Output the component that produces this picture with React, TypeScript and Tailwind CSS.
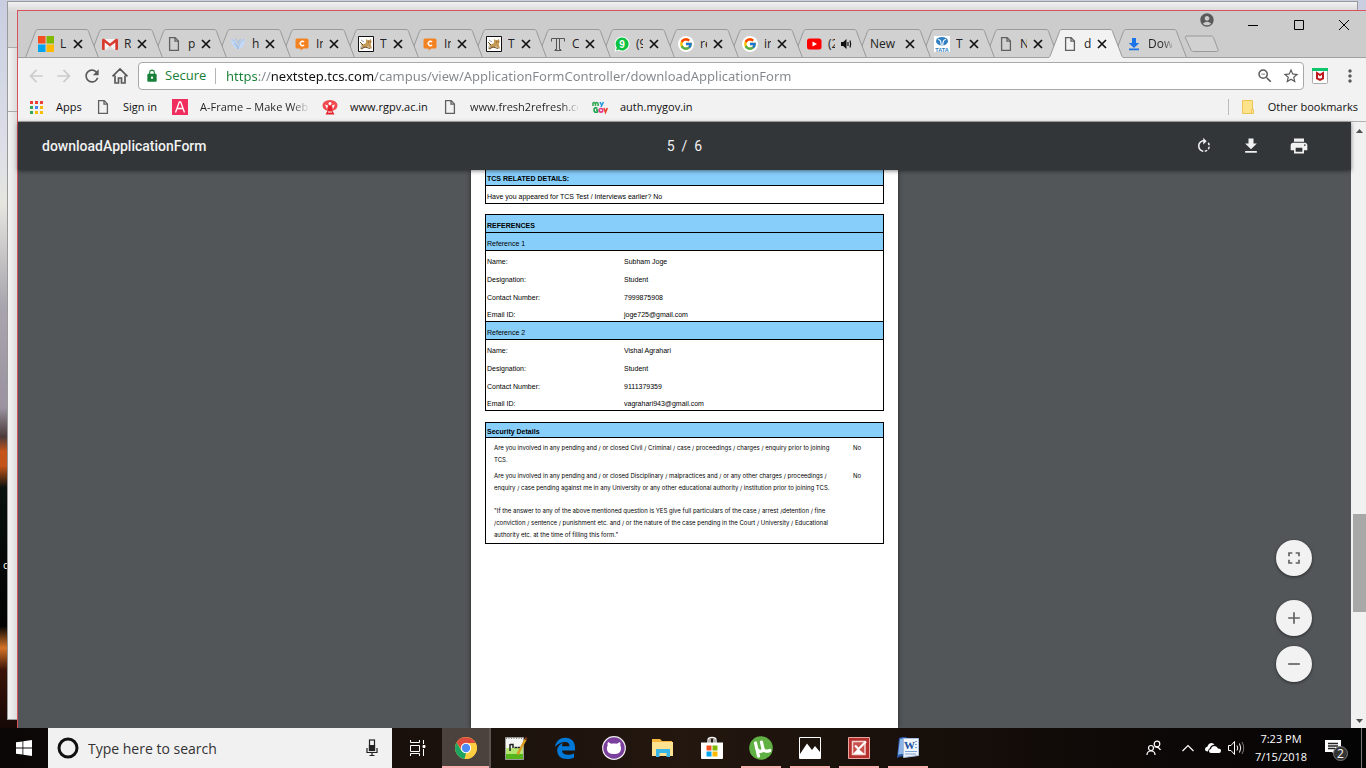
import React from "react";
import {
  MdAccountCircle,
  MdAdd,
  MdArrowBack,
  MdArrowForward,
  MdFileDownload,
  MdFullscreen,
  MdLock,
  MdMoreVert,
  MdPrint,
  MdRefresh,
  MdRemove,
  MdRotateRight,
  MdStarBorder,
  MdZoomOut,
} from "react-icons/md";
import { FcGoogle } from "react-icons/fc";

type IconName =
  | "microsoft" | "gmail" | "file" | "bird" | "chat" | "cat" | "serif"
  | "whatsapp" | "google" | "youtube" | "tata" | "download" | "none";

function FileIcon() {
  return (
    <svg width="16" height="16" viewBox="0 0 16 16" fill="none" stroke="#5f6062" strokeWidth="1.3">
      <path d="M3.6 1.6h5.600l3.200 3.300v9.500H3.600zM9 1.800v3.400h3.300" />
    </svg>
  );
}

function Favicon({ name }: { name: IconName }) {
  switch (name) {
    case "microsoft":
      return (
        <svg width="16" height="16" viewBox="0 0 16 16">
          <path fill="#f25022" d="M0 0h7.500v7.500H0z" /><path fill="#7fba00" d="M8.500 0H16v7.500H8.500z" />
          <path fill="#00a4ef" d="M0 8.500h7.500V16H0z" /><path fill="#ffb900" d="M8.500 8.500H16V16H8.500z" />
        </svg>
      );
    case "gmail":
      return (
        <svg width="16" height="16" viewBox="0 0 16 16">
          <path fill="#f4f4f4" d="M1 3h14v11H1z" />
          <path fill="#dcdcdc" d="M3.500 14L8 9.500l4.500 4.500z" />
          <path fill="#d93a2f" d="M0 4a1.500 1.500 0 0 1 2.400-1L8 7.600 13.600 3A1.500 1.500 0 0 1 16 4v9a1 1 0 0 1-1 1h-1.700V6.400L8 10.600 2.700 6.400V14H1a1 1 0 0 1-1-1z" />
        </svg>
      );
    case "file":
      return <FileIcon />;
    case "bird":
      return (
        <svg width="16" height="16" viewBox="0 0 16 16">
          <path fill="#c3d9f5" d="M1 3c4 0 6 3 7 10C4 12 1 8 1 3zM15 3c-4 0-6 3-6 10 4-1 6-5 6-10z" />
          <path fill="none" stroke="#9dbfeb" strokeWidth="1" d="M1.500 3.500c3 1 5 4 6.500 9.500 1-5.500 3-8.500 6.500-9.500M4 8c2 1 3 2.500 4 5M5 3c2 1 2.500 2 3 4l2.500-4" />
        </svg>
      );
    case "chat":
      return (
        <svg width="16" height="16" viewBox="0 0 16 16">
          <path fill="#f58220" d="M3 2.500h10a1.500 1.500 0 0 1 1.500 1.500v7a1.500 1.500 0 0 1-1.500 1.500h-3.500L6.500 14.500v-2H3A1.500 1.500 0 0 1 1.500 11V4A1.500 1.500 0 0 1 3 2.500z" />
          <path fill="none" stroke="#fff" strokeWidth="1.500" d="M10 6a2.200 2.200 0 1 0 0 3" />
        </svg>
      );
    case "cat":
      return (
        <svg width="16" height="16" viewBox="0 0 16 16">
          <path fill="#fff" stroke="#111" d="M.5.5h15v15H.500z" />
          <path fill="#c59a55" d="M8 3l1.500 1h2L13 2.700l.6 3.300-1 2 1.400 4.500h-2l-1.500-2-2.500.700L3 13H2l2-2.500L2.500 8 5 8.500 8 7z" />
          <path stroke="#594018" strokeWidth=".9" d="M2 6l3 3M3 13l4-2 5 1.500M10 6h.800M12 6h.700" fill="none" />
          <path stroke="#a7a7a7" d="M3 4l3 2M2 11h3" />
        </svg>
      );
    case "serif":
      return (
        <svg width="16" height="16" viewBox="0 0 16 16" fill="none" stroke="#555" strokeWidth="1">
          <path d="M1.500 5.500v-3h13v3M6.500 2.500v11M9.500 2.500v11M4.500 14.500h7M5 13.500h1.500M9.500 13.500H11" />
        </svg>
      );
    case "whatsapp":
      return (
        <svg width="16" height="16" viewBox="0 0 16 16">
          <path fill="#fff" d="M8 .5a7.500 7.500 0 1 1-3.500 14.100L.5 15.800l1.200-4A7.500 7.500 0 0 1 8 .5z" />
          <path fill="#0dc143" d="M8 1.500a6.500 6.500 0 1 1-3.200 12.100L2 14.400l.8-2.700A6.500 6.500 0 0 1 8 1.500z" />
          <text x="8" y="11.500" textAnchor="middle" fontSize="10" fontWeight="700" fill="#fff" fontFamily="Liberation Sans, sans-serif">9</text>
        </svg>
      );
    case "google":
      return (
        <span className="flex size-4 items-center justify-center rounded-full bg-white">
          <FcGoogle size={14} />
        </span>
      );
    case "youtube":
      return (
        <svg width="16" height="16" viewBox="0 0 16 16">
          <rect x="1" y="2.500" width="14.500" height="11" rx="2.500" fill="#f00" />
          <path fill="#fff" d="M6.500 5.500l4.500 2.500-4.500 2.500z" />
        </svg>
      );
    case "tata":
      return (
        <svg width="16" height="16" viewBox="0 0 16 16">
          <path fill="#fff" d="M0 0h16v16H0z" />
          <ellipse cx="8" cy="5.200" rx="6" ry="4.200" fill="#2f7fc2" />
          <path fill="none" stroke="#fff" strokeWidth="1.100" d="M7.200 9.500c0-4-.6-6-3.200-6M8.800 9.500c0-4 .6-6 3.200-6" />
          <text x="8" y="15.500" textAnchor="middle" fontSize="5.500" fontWeight="700" fill="#2f7fc2" fontFamily="Liberation Sans, sans-serif">TATA</text>
        </svg>
      );
    case "download":
      return (
        <svg width="16" height="16" viewBox="0 0 16 16">
          <path fill="#1a73e8" d="M6 2h4v5h3.200L8 12 2.800 7H6zM3 12.500h10v1.700H3z" />
        </svg>
      );
    default:
      return null;
  }
}

interface TabInfo {
  icon: IconName;
  title: string;
  active?: boolean;
  end?: "close" | "sound" | "none";
}

const tabs: TabInfo[] = [
  { icon: "microsoft", title: "L" },
  { icon: "gmail", title: "R" },
  { icon: "file", title: "p" },
  { icon: "bird", title: "h" },
  { icon: "chat", title: "In" },
  { icon: "cat", title: "T" },
  { icon: "chat", title: "In" },
  { icon: "cat", title: "T" },
  { icon: "serif", title: "C" },
  { icon: "whatsapp", title: "(9" },
  { icon: "google", title: "re" },
  { icon: "google", title: "in" },
  { icon: "youtube", title: "(2", end: "sound" },
  { icon: "none", title: "New" },
  { icon: "tata", title: "T" },
  { icon: "file", title: "N" },
  { icon: "file", title: "d", active: true },
  { icon: "download", title: "Dow", end: "none" },
];

function Tab({ tab, index }: { tab: TabInfo; index: number }) {
  const end = tab.end ?? "close";
  return (
    <li className="relative -mr-3 h-[29px] w-[76px] shrink-0" style={{ zIndex: tab.active ? 40 : 30 - index }}>
      <svg className="absolute inset-0" width="76" height="29" viewBox="0 0 76 29">
        <path
          d="M0 29C1.500 28.500 1.800 27.500 2.500 26L11.500 2.500C12 1.200 12.500.5 14 .5H62c1.500 0 2 .7 2.500 2L73.500 26c.7 1.500 1 2.500 2.500 3"
          fill={tab.active ? "#f2f2f2" : "#d1d1d1"}
          stroke="#9a9a9a"
        />
        {!tab.active && <path d="M0 28.500h76" stroke="#a0a0a0" />}
      </svg>
      <div className="relative flex h-[29px] items-center pl-[14px] pt-px text-[12px] text-[#222]">
        {tab.icon !== "none" && (
          <span className="mr-1.5 flex w-4 shrink-0"><Favicon name={tab.icon} /></span>
        )}
        <a
          href="#tab"
          className={`mr-[5px] block overflow-hidden whitespace-nowrap ${tab.icon === "none" ? "w-[29px]" : end === "none" ? "w-6 bg-linear-to-r from-[#222] from-60% to-[#222]/20 bg-clip-text text-transparent" : "w-[7px]"}`}
        >
          {tab.title}
        </a>
        {end === "close" && (
          <button aria-label="Close tab" className="flex size-3 items-center justify-center">
            <svg width="10" height="10" viewBox="0 0 10 10" stroke="#111" strokeWidth="1.700"><path d="M1 1l8 8M9 1L1 9" /></svg>
          </button>
        )}
        {end === "sound" && (
          <button aria-label="Mute tab" className="flex size-3 items-center justify-center">
            <svg width="12" height="12" viewBox="0 0 12 12" fill="none" stroke="#111" strokeWidth="1.200">
              <path fill="#111" stroke="none" d="M1 4h2.200L6.500 1v10L3.200 8H1z" /><path d="M8 4v4M10 2.500q1.300 3.500 0 7" />
            </svg>
          </button>
        )}
      </div>
    </li>
  );
}

function TitleBar() {
  return (
    <header className="relative flex h-[47px] shrink-0 items-end border-b border-[#a0a0a0] bg-[#ccc]">
      <ul className="relative top-px flex items-end pl-1.5">
        {tabs.map((tab, i) => <Tab key={i} tab={tab} index={i} />)}
      </ul>
      <button aria-label="New tab" className="mb-1 ml-2">
        <svg width="36" height="18" viewBox="0 0 36 18">
          <path d="M3 1h24c1.500 0 2 .5 2.500 1.500L34 14.500c.5 1.500 0 2-1.500 2H9.500c-1.500 0-2-.5-2.500-1.500L1.500 3C1 1.800 1.500 1 3 1z" fill="#d1d1d1" stroke="#9a9a9a" />
        </svg>
      </button>
      <div className="absolute right-0 top-0 flex items-start">
        <button aria-label="Profile" className="mr-[15px] mt-px text-[#5a5a5a]"><MdAccountCircle size={16} /></button>
        <button aria-label="Minimize" className="flex h-7 w-[46px] items-center justify-center"><svg width="10" height="10" stroke="#000"><path d="M0 5.500h10" /></svg></button>
        <button aria-label="Maximize" className="flex h-7 w-[46px] items-center justify-center"><svg width="10" height="10" fill="none" stroke="#000"><path d="M.5.5h9v9h-9z" /></svg></button>
        <button aria-label="Close" className="flex h-7 w-[44px] items-center justify-center"><svg width="10" height="10" stroke="#000"><path d="M0 0l10 10M10 0L0 10" /></svg></button>
      </div>
    </header>
  );
}

function AddressBar() {
  return (
    <nav className="flex h-8 shrink-0 items-center bg-[#f2f2f2] pl-1 pr-1.5 pt-1 text-[#5a5a5a]">
      <button aria-label="Back" className="flex w-7 justify-center text-[#ccc]"><MdArrowBack size={20} /></button>
      <button aria-label="Forward" className="flex w-7 justify-center text-[#ccc]"><MdArrowForward size={20} /></button>
      <button aria-label="Reload" className="flex w-7 justify-center"><MdRefresh size={20} /></button>
      <button aria-label="Home" className="flex w-7 justify-center">
        <svg width="18" height="18" viewBox="0 0 18 18" fill="none" stroke="currentColor" strokeWidth="1.700"><path d="M1.500 9.300L9 2l7.500 7.300M4 8.500V16h3.500v-5h3v5H14V8.500" /></svg>
      </button>
      <form className="ml-1 flex h-7 min-w-0 flex-1 items-center rounded-sm border border-[#a8a8a8] bg-white pl-1.5 pr-[3px]" onSubmit={(e) => e.preventDefault()}>
        <MdLock className="text-[#188038]" size={14} />
        <label htmlFor="url" className="ml-1.5 w-[43px] text-[13px] text-[#188038]">Secure</label>
        <span className="ml-[7px] mr-[10px] h-4 w-px bg-[#b4b4b4]" />
        <input
          id="url"
          defaultValue="https://nextstep.tcs.com/campus/view/ApplicationFormController/downloadApplicationForm"
          className="min-w-0 flex-1 bg-linear-[to_right,#188038_0_31px,#80868b_31px_45px,#111_45px_149px,#80868b_149px] bg-clip-text pt-px font-['Noto_Sans',sans-serif] text-[13px] text-transparent outline-none"
        />
        <button aria-label="Zoom" className="mr-2 flex"><MdZoomOut size={18} /></button>
        <button aria-label="Bookmark" className="flex"><MdStarBorder size={18} /></button>
      </form>
      <button aria-label="McAfee" className="ml-2 flex">
        <svg width="16" height="16" viewBox="0 0 16 16">
          <rect x=".5" y=".5" width="15" height="15" rx="1" fill="#fff" stroke="#aaa" />
          <path fill="#0fc46c" d="M0 0h16v3H0z" />
          <path fill="none" stroke="#c01818" strokeWidth="2" d="M5 5v5.500L8 12l3-1.500V5L8 7z" />
        </svg>
      </button>
      <button aria-label="Menu" className="ml-3 flex"><MdMoreVert size={20} /></button>
    </nav>
  );
}

function Bookmark({ icon, label, width, fade }: { icon: React.ReactNode; label: string; width: string; fade?: boolean }) {
  return (
    <a href="#bookmark" className={`flex shrink-0 items-center ${width}`}>
      <span className="mr-3 flex w-4 shrink-0 justify-center">{icon}</span>
      <span className={fade ? "w-[108px] overflow-hidden whitespace-nowrap bg-linear-to-r from-[#222] from-85% to-[#222]/10 bg-clip-text text-transparent" : "whitespace-nowrap"}>{label}</span>
    </a>
  );
}

function BookmarksBar() {
  const dots = ["#ea4335", "#ea4335", "#ea4335", "#34a853", "#4285f4", "#fbbc05", "#34a853", "#fbbc05", "#fbbc05"];
  return (
    <nav className="flex h-8 shrink-0 items-center border-b border-[#b0b0b0] bg-[#f2f2f2] pl-[10px] pr-2 pt-[3px] text-[11px] text-[#111]">
      <Bookmark width="w-[67px]" label="Apps" icon={<svg width="13" height="13">{dots.map((c, i) => <rect key={i} x={(i % 3) * 5} y={Math.floor(i / 3) * 5} width="3" height="3" fill={c} />)}</svg>} />
      <Bookmark width="w-[77px]" label="Sign in" icon={<FileIcon />} />
      <Bookmark width="w-[150px]" fade label="A-Frame – Make WebVR" icon={
        <svg width="16" height="16" viewBox="0 0 16 16"><path fill="#ef2d5e" d="M0 0h16v16H0z" /><path d="M3.500 13.500L7.300 3h1.400l3.800 10.500M5 9.500h6" fill="none" stroke="#fff" strokeWidth="1.300" /></svg>
      } />
      <Bookmark width="w-[120px]" label="www.rgpv.ac.in" icon={
        <svg width="16" height="16" viewBox="0 0 16 16">
          <ellipse cx="8" cy="6.500" rx="7.500" ry="5.500" fill="#ee4a50" />
          <path fill="#fff" d="M3 5.500l3 1-1 3.500zM13 5.500l-3 1 1 3.500z" />
          <circle cx="8" cy="4.500" r="1.500" fill="#fff" />
          <path fill="#e3202b" d="M6.500 7h3l.5 4 2.500 4.500h-9L6 11z" />
          <path stroke="#fff" d="M6 13h4" />
        </svg>
      } />
      <Bookmark width="w-[150px]" fade label="www.fresh2refresh.com" icon={<FileIcon />} />
      <Bookmark width="w-[110px]" label="auth.mygov.in" icon={
        <svg width="16" height="16" viewBox="0 0 16 16" fill="none" strokeWidth="1.600">
          <path stroke="#35a853" d="M1 7V3.500M1 4q3-1.500 2.500 3M3.600 4q3-1.500 2.600 3" />
          <path stroke="#2b9be0" d="M8 3l1.500 3M11.500 3L9 8" />
          <path stroke="#19a34a" d="M5.500 9.200Q2 8 2 11t3.500 2v-2H4" />
          <circle cx="9" cy="11.300" r="1.800" stroke="#e8388a" />
          <path stroke="#e8432f" d="M12 9l1.500 4.200L15.300 9" />
        </svg>
      } />
      <span className="ml-auto mr-[11px] h-4 w-px bg-[#bbb]" />
      <Bookmark width="" label="Other bookmarks" icon={<svg width="14" height="14" viewBox="0 0 14 14"><path fill="#ffe38a" stroke="#edc557" d="M1.500.5h10v9h1v4h-11zM11.500 9.500h-1v4" /></svg>} />
    </nav>
  );
}

function DetailRows({ rows }: { rows: [string, string][] }) {
  return (
    <>
      {rows.map(([k, v], i) => (
        <tr key={k} className={i === rows.length - 1 ? "h-[17px]" : "h-[18px]"}>
          <td className={`w-[137px] p-0 pl-px pt-0.5 ${i === rows.length - 1 ? "border-b border-black" : ""}`}>{k}</td>
          <td className={`p-0 pl-px pt-0.5 ${i === rows.length - 1 ? "border-b border-black" : ""}`}>{v}</td>
        </tr>
      ))}
    </>
  );
}

function PdfPage() {
  const head = "border-b border-black bg-[#87cefa] p-0 pl-px pt-1 text-left";
  const table = "w-full border-separate border-spacing-0 border-x border-black";
  return (
    <article className="flex w-[427px] flex-col bg-white px-[14px] font-['Liberation_Sans',Arial,sans-serif] text-[7px] leading-[9px] text-black shadow-[0_0_4px_#222]">
      <table className={table}>
        <tbody>
          <tr className="h-4"><th className="border-b border-black bg-[#87cefa] p-0 pl-px pt-px text-left">TCS RELATED DETAILS:</th></tr>
          <tr className="h-[18px]"><td className="border-b border-black p-0 pl-px pt-1">Have you appeared for TCS Test / Interviews earlier? No</td></tr>
        </tbody>
      </table>
      <table className={`${table} mt-[10px] border-t`}>
        <tbody>
          <tr className="h-[18px]"><th colSpan={2} className={head}>REFERENCES</th></tr>
          <tr className="h-[18px]"><th colSpan={2} className={`${head} font-normal`}>Reference 1</th></tr>
          <DetailRows rows={[["Name:", "Subham Joge"], ["Designation:", "Student"], ["Contact Number:", "7999875908"], ["Email ID:", "joge725@gmail.com"]]} />
          <tr className="h-[18px]"><th colSpan={2} className={`${head} font-normal`}>Reference 2</th></tr>
          <DetailRows rows={[["Name:", "Vishal Agrahari"], ["Designation:", "Student"], ["Contact Number:", "9111379359"], ["Email ID:", "vagrahari943@gmail.com"]]} />
        </tbody>
      </table>
      <table className={`${table} mt-[11px] border-y`}>
        <tbody className="align-top font-[Inter,sans-serif] text-[6px] leading-[12px]">
          <tr className="h-[15px]"><th colSpan={2} className="border-b border-black bg-[#87cefa] p-0 pl-px pt-1 text-left font-['Liberation_Sans',Arial,sans-serif] text-[7px] leading-[9px]">Security Details</th></tr>
          <tr>
            <td className="whitespace-nowrap p-0 pl-2 pt-1">Are you involved in any pending and / or closed Civil / Criminal / case / proceedings / charges / enquiry prior to joining<br />TCS.</td>
            <td className="w-[30px] p-0 pt-1">No</td>
          </tr>
          <tr>
            <td className="whitespace-nowrap p-0 pl-2 pt-1">Are you involved in any pending and / or closed Disciplinary / malpractices and / or any other charges / proceedings /<br />enquiry / case pending against me in any University or any other educational authority / institution prior to joining TCS.</td>
            <td className="p-0 pt-1">No</td>
          </tr>
          <tr>
            <td colSpan={2} className="p-0 pb-0.5 pl-2 pt-[11px]">"If the answer to any of the above mentioned question is YES give full particulars of the case / arrest /detention / fine<br />/conviction / sentence / punishment etc. and / or the nature of the case pending in the Court / University / Educational<br />authority etc. at the time of filling this form."</td>
          </tr>
        </tbody>
      </table>
    </article>
  );
}

function PdfViewer() {
  const round = "flex size-9 items-center justify-center rounded-full bg-[#f2f2f2] text-[#616161] shadow-[0_1px_3px_rgba(0,0,0,0.5)]";
  return (
    <main className="flex min-h-0 flex-1 bg-[#525659]">
      <section className="relative flex min-w-0 flex-1 flex-col">
        <div className="z-10 grid h-12 shrink-0 grid-cols-3 items-center bg-[#323639] pl-6 pr-[42px] font-[Roboto,sans-serif] text-[14px] text-[#f1f1f1] shadow-[0_1px_4px_rgba(0,0,0,0.5)]">
          <h1 className="font-medium">downloadApplicationForm</h1>
          <p className="pl-[18px] text-center">5&nbsp; /&nbsp; 6</p>
          <div className="flex justify-end gap-7">
            <button aria-label="Rotate clockwise"><MdRotateRight size={18} /></button>
            <button aria-label="Download"><MdFileDownload size={20} /></button>
            <button aria-label="Print"><MdPrint size={20} /></button>
          </div>
        </div>
        <div className="flex min-h-0 flex-1 justify-center overflow-hidden"><PdfPage /></div>
        <div className="absolute bottom-[46px] right-[39px] flex flex-col">
          <button aria-label="Fit to page" className={`${round} mb-6`}><MdFullscreen size={20} /></button>
          <button aria-label="Zoom in" className={`${round} mb-[10px]`}><MdAdd size={20} /></button>
          <button aria-label="Zoom out" className={round}><MdRemove size={20} /></button>
        </div>
      </section>
      <div className="flex w-[15px] shrink-0 flex-col items-end bg-[#f1f1f1]">
        <svg width="15" height="16" viewBox="0 0 15 16"><path fill="#505050" d="M5 11h7L8.500 7z" /></svg>
        <div className="flex-[376]" />
        <div className="w-[13px] flex-[98] bg-[#a8a8a8]" />
        <div className="flex-[100]" />
        <svg width="15" height="16" viewBox="0 0 15 16"><path fill="#505050" d="M5 7h7L8.500 11z" /></svg>
      </div>
    </main>
  );
}

const apps: { label: string; running?: boolean; active?: boolean; icon: React.ReactNode }[] = [
  {
    label: "Chrome", active: true, icon: (
      <svg width="22" height="22" viewBox="0 0 22 22">
        <circle cx="11" cy="11" r="11" fill="#ffcd40" />
        <path fill="#dd4b3e" d="M1.500 5.500A11 11 0 0 1 20.600 6H11L7 13.500z" />
        <path fill="#1da462" d="M1.500 5.500l5 8.200L11 16l-1.500 5.900A11 11 0 0 1 1.500 5.500z" />
        <path fill="#ffcd40" d="M20.600 6A11 11 0 0 1 9.500 21.900L15.500 13 14 6z" />
        <circle cx="11" cy="11" r="5.200" fill="#fff" /><circle cx="11" cy="11" r="4.200" fill="#4c8bf5" />
      </svg>
    ),
  },
  {
    label: "Notepad++", icon: (
      <svg width="24" height="24" viewBox="0 0 24 24">
        <path fill="#f5f7f4" stroke="#999" d="M1.500 1.500h18v22h-18z" /><path fill="#b5e672" d="M2 12h17v11H2z" /><path fill="#57b51c" d="M2 18h17v5H2z" />
        <path stroke="#888" strokeDasharray="1 1.500" strokeWidth="2" d="M2 2h17" />
        <path stroke="#222" strokeWidth="1.500" fill="none" d="M6 8v7M6 8.500h3V12M10.500 11.500h3M14 11.500h2" />
        <path stroke="#d99b1e" strokeWidth="2.500" d="M21.500 3.500l-8 15" /><path stroke="#7a3a1a" strokeWidth="2.500" d="M22.500 1.500l-1 2" />
      </svg>
    ),
  },
  {
    label: "Edge", icon: (
      <svg width="22" height="22" viewBox="0 0 22 22">
        <path fill="#0078d7" d="M1 10C2 4 6 .8 11.500.8 17.500.8 21 5 21 11v2.500H8c.3 3 3 4.300 6 4.300 2.300 0 4.300-.7 6-1.600v4.300c-2 1-4.500 1.500-7 1.500-6 0-9.800-3.500-9.800-8.500C3.200 10 5.500 7.300 9 6 8.300 7 8 8.200 8 9.300h7.500C15.500 6.500 14 5 11 5 7 5 3.500 7 1 10z" />
      </svg>
    ),
  },
  {
    label: "GitHub", icon: (
      <svg width="24" height="24" viewBox="0 0 24 24">
        <circle cx="12" cy="12" r="11.300" fill="#7b3f9d" stroke="#eee" strokeWidth="1.200" />
        <path fill="#fff" d="M6 6l3.300 1.800c1.700-.4 3.700-.4 5.400 0L18 6c.6 1.300.6 2.500.3 3.500 1.700 2.500.8 7.500-3.300 8.200-2 .4-4 .4-6 0-4.100-.7-5-5.700-3.300-8.200C5.400 8.500 5.400 7.300 6 6z" />
      </svg>
    ),
  },
  {
    label: "File Explorer", icon: (
      <svg width="24" height="22" viewBox="0 0 24 22">
        <path fill="#f5b83d" d="M1 2h8l2 2h10v4H1z" /><path fill="#ffe28f" d="M1 5h21v14H1z" /><path fill="#3ab5e8" d="M5 12h14v8h-3.500v-4h-7v4H5z" />
      </svg>
    ),
  },
  {
    label: "Store", icon: (
      <svg width="24" height="24" viewBox="0 0 24 24">
        <path fill="none" stroke="#fff" strokeWidth="1.300" d="M8 7V4q0-2.500 4-2.500T16 4v3M10 7V3M14 7V3" /><path fill="#fff" d="M1 6.500h22V22q0 1-1 1H2q-1 0-1-1z" />
        <path fill="#f25022" d="M6.500 9.500h5v5h-5z" /><path fill="#7fba00" d="M12.500 9.500h5v5h-5z" /><path fill="#00a4ef" d="M6.500 15.500h5v5h-5z" /><path fill="#ffb900" d="M12.500 15.500h5v5h-5z" />
      </svg>
    ),
  },
  {
    label: "uTorrent", running: true, icon: (
      <svg width="24" height="24" viewBox="0 0 24 24">
        <circle cx="12" cy="12" r="11.800" fill="#60b044" />
        <path fill="none" stroke="#fff" strokeWidth="3.200" strokeLinecap="round" d="M6.500 7l3 13M7.500 12c1 4 6 4.500 6.500 1L12.500 6M13.800 12c.7 3 3.700 4 7 2.500" />
      </svg>
    ),
  },
  {
    label: "Photos", running: true, icon: (
      <svg width="22" height="22" viewBox="0 0 22 22"><path fill="none" stroke="#fff" d="M.5.5h21v21H.500z" /><path fill="#fff" d="M1 17l7-10.500 5 6.500 3-4 5 6v6H1z" /></svg>
    ),
  },
  {
    label: "Picture Manager", running: true, icon: (
      <svg width="22" height="22" viewBox="0 0 22 22"><path fill="#b52f2d" stroke="#e9a6a2" d="M.5.5h21v21H.500z" /><path fill="#c9514d" stroke="#f3d5d2" strokeWidth="1.500" d="M4.500 4.500h12.500v13H4.500z" /><path fill="#fff" d="M5 17l5-5.500 6.500 5.500z" /><path fill="none" stroke="#fff" strokeWidth="2.200" d="M7 8.500l3.500 3.500L18 4.500" /></svg>
    ),
  },
  {
    label: "Word", running: true, icon: (
      <svg width="24" height="24" viewBox="0 0 24 24">
        <path fill="#2b5aa8" d="M3 2q5-2 9 0l-2 19q-4-2-9 1z" /><path fill="#8db4e6" d="M4 3q3-1 5 0L7 18q-3-.5-5 1z" />
        <path fill="#f0f5fc" stroke="#a8bedb" d="M7.500 2.500h15v17l-15 2z" /><path stroke="#7ba0d4" d="M9 15.500h12M9 18h11M19 5.500h2M19 8.500h2M19 11.500h2" />
        <text x="8" y="12.500" fontSize="11" fontWeight="700" fill="#214f9c" fontFamily="Liberation Serif, serif">W</text>
      </svg>
    ),
  },
];

function Taskbar() {
  return (
    <footer className="flex h-10 shrink-0 bg-linear-to-r from-[#0b0706] via-[#23170f] via-50% to-[#050404] text-white">
      <button aria-label="Start" className="flex w-12 shrink-0 items-center justify-center">
        <svg width="16" height="16" viewBox="0 0 16 16" fill="#fff"><path d="M0 2.300l6.500-.9v6.200H0zM7.300 1.300L16 0v7.600H7.300zM0 8.400h6.500v6.200L0 13.700zM7.300 8.400H16V16l-8.700-1.200z" /></svg>
      </button>
      <label className="flex w-[344px] shrink-0 items-center bg-[#f1f1f1] pl-[9px] pr-[14px]">
        <svg width="22" height="22" viewBox="0 0 22 22"><circle cx="11" cy="11" r="9" fill="none" stroke="#111" strokeWidth="3" /></svg>
        <input aria-label="Search" placeholder="Type here to search" className="ml-[9px] min-w-0 flex-1 text-[14px] outline-none placeholder:text-[#333]" />
        <svg width="12" height="18" viewBox="0 0 12 18" fill="none" stroke="#222" strokeWidth="1.200"><rect x="3.500" y="1" width="5" height="10.500" /><path d="M1 9v4.500h10V9M6 13.500v3M3.500 16.500h5" /><path fill="#222" d="M3.500 6.500h5v5h-5z" /></svg>
      </label>
      <button aria-label="Task view" className="flex w-[50px] shrink-0 items-center justify-center">
        <svg width="17" height="16" viewBox="0 0 17 16" fill="none" stroke="#fff"><path d="M1.500 0v2.500h9V0M1.500 5.500h9v6h-9zM1.500 16v-2.500h9V16M14.500 0v4M14.500 9v7" /><path fill="#fff" d="M14 5.500h2v2h-2z" /></svg>
      </button>
      {apps.map((app) => (
        <button
          key={app.label}
          aria-label={app.label}
          className={`flex w-[49px] shrink-0 flex-col items-center justify-end ${app.active ? "border-r-2 border-[#5e534f] bg-[#4b423d]" : ""}`}
        >
          <span className="flex flex-1 items-center pt-0.5">{app.icon}</span>
          <span className={`h-0.5 ${app.active ? "w-full bg-[#f9aeb0]" : app.running ? "w-10 bg-[#f9aeb0]" : "w-10"}`} />
        </button>
      ))}
      <div className="ml-auto flex items-center">
        <button aria-label="People" className="mr-5">
          <svg width="16" height="16" viewBox="0 0 16 16" fill="none" stroke="#fff" strokeWidth="1.200"><circle cx="5" cy="8" r="2.500" /><path d="M1 15q0-4 4-4t4 4" /><circle cx="11" cy="4" r="2.800" /><path d="M8.500 7q4-.5 6 3" /></svg>
        </button>
        <button aria-label="Show hidden icons" className="mr-[11px]"><svg width="12" height="8" fill="none" stroke="#fff" strokeWidth="1.200"><path d="M.5 7L6 1.500 11.500 7" /></svg></button>
        <button aria-label="OneDrive" className="mr-[7px]">
          <svg width="16" height="12" viewBox="0 0 16 12" fill="#fff"><path d="M3 9.500Q0 9.500 0 7q0-2 2.500-2.500Q3.500 1 6.500 1q2 0 3 1.500-4 .5-4.500 3.500Q3 7 3 9.500z" /><path d="M6 11q-2 0-2-2t2-2q.5-3 3.500-3Q12 4 13 6.500q3 0 3 2.200T14 11z" /></svg>
        </button>
        <button aria-label="Volume" className="mr-2.5">
          <svg width="17" height="14" viewBox="0 0 17 14" fill="none" stroke="#fff"><path d="M.5 4.500H3l3.500-4v13L3 9.500H.500zM9 4.500q1.500 2.500 0 5M11.500 2.500q2.500 4.500 0 9" /><path stroke="#777" d="M14 1q3.500 6 0 12" /></svg>
        </button>
        <time className="w-[52px] whitespace-nowrap text-center text-[11px] leading-[18px]">7:23 PM<br />7/15/2018</time>
        <button aria-label="Notifications" className="ml-[18px] flex">
          <svg width="26" height="26" viewBox="0 0 26 26">
            <path fill="#fff" d="M0 5h16v12h-5v4l-4-4H0z" /><path stroke="#222" strokeWidth="1.300" d="M3 8.500h10M3 11h10M3 13.500h7" />
            <circle cx="15.500" cy="18.500" r="7" fill="#333" stroke="#777" /><text x="15.500" y="23" textAnchor="middle" fontSize="12" fill="#fff">2</text>
          </svg>
        </button>
        <span className="ml-[10px] mr-1 h-10 w-px bg-[#777]" />
      </div>
    </footer>
  );
}

export default function App() {
  return (
    <div className="flex h-screen flex-col overflow-hidden font-['Open_Sans','Noto_Sans',sans-serif]">
      <div className="relative flex min-h-0 flex-1 flex-col bg-[linear-gradient(to_bottom,#c9cde0_0%,#dcdfe8_20%,#e6e5df_28%,#a9a5ae_42%,#9b93a0_56%,#4a3a3a_60%,#c5541a_62%,#c5541a_64%,#08120f_67%,#020202_86%,#d57328_89%,#3b1409_92%,#170806_100%)] pl-[17px] pt-[10px]">
        <span className="absolute left-[3px] top-[557px] text-[11px] text-white">c</span>
        <div className="absolute bottom-2 left-[7px] right-2 top-px border border-[#999] bg-linear-to-r from-[#f5f5f5] to-[#d9d9d9] to-[10px]">
          <div className="h-[46px] border-b border-[#aaa] bg-linear-to-b from-[#f2f2f2] to-[#d6d6d6] to-[10px]" />
          <div className="h-16 border-b border-[#aaa]" />
        </div>
        <div className="relative flex min-h-0 flex-1 flex-col border-l border-t border-[#d9525c]">
          <TitleBar />
          <AddressBar />
          <BookmarksBar />
          <PdfViewer />
        </div>
      </div>
      <Taskbar />
    </div>
  );
}
